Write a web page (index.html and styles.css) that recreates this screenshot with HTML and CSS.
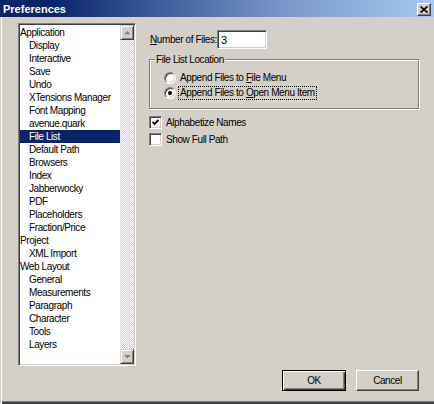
FILE: index.html
```html
<!DOCTYPE html>
<html>
<head>
<meta charset="utf-8">
<link rel="stylesheet" href="styles.css">
</head>
<body>
<div class="window">
  <div class="titlebar">
    <span class="title">Preferences</span>
    <span class="close"><svg width="8" height="7" viewBox="0 0 8 7"><path d="M0.5 0.5 L7.5 6.5 M7.5 0.5 L0.5 6.5" stroke="#000" stroke-width="1.8" fill="none"/></svg></span>
  </div>
  <div class="content">
    <div class="listbox">
      <ul class="items">
        <li class="top">Application</li>
        <li>Display</li>
        <li>Interactive</li>
        <li>Save</li>
        <li>Undo</li>
        <li>XTensions Manager</li>
        <li>Font Mapping</li>
        <li>avenue.quark</li>
        <li class="sel">File List</li>
        <li>Default Path</li>
        <li>Browsers</li>
        <li>Index</li>
        <li>Jabberwocky</li>
        <li>PDF</li>
        <li>Placeholders</li>
        <li>Fraction/Price</li>
        <li class="top">Project</li>
        <li>XML Import</li>
        <li class="top">Web Layout</li>
        <li>General</li>
        <li>Measurements</li>
        <li>Paragraph</li>
        <li>Character</li>
        <li>Tools</li>
        <li>Layers</li>
      </ul>
      <div class="scrollbar">
        <span class="sbtn"><svg width="7" height="4" viewBox="0 0 7 4"><path d="M1 4 L4.5 0.5 L8 4Z" fill="#fff"/><path d="M0 3.5 L3.5 0 L7 3.5Z" fill="#808080"/></svg></span>
        <span class="track"></span>
        <span class="sbtn"><svg width="7" height="4" viewBox="0 0 7 4"><path d="M0 0 L7 0 L3.5 3.5Z" fill="#808080"/></svg></span>
      </div>
    </div>
    <div class="right">
      <div class="num-row">
        <span class="num-label"><u>N</u>umber of Files:</span>
        <input class="field" type="text" value="3">
      </div>
      <fieldset class="group">
        <legend class="legend">File List Location</legend>
        <div class="group-body">
          <div class="radio-row">
            <span class="radio"></span>
            <span class="rlabel">Append Files to <u>F</u>ile Menu</span>
          </div>
          <div class="radio-row">
            <span class="radio on"><span class="dot"></span></span>
            <span class="rlabel focus">Append Files to <u>O</u>pen Menu Item</span>
          </div>
        </div>
      </fieldset>
      <div class="checks">
        <div class="check-row">
          <span class="cbox"><svg width="7" height="7" viewBox="0 0 7 7"><path d="M0.5 3 L2.5 5 L6.5 1" stroke="#000" stroke-width="1.8" fill="none"/></svg></span>
          <span class="clabel">Alphabetize Names</span>
        </div>
        <div class="check-row">
          <span class="cbox"></span>
          <span class="clabel">Show Full Path</span>
        </div>
      </div>
      <div class="footer">
        <button class="btn default">OK</button>
        <button class="btn">Cancel</button>
      </div>
    </div>
  </div>
</div>
</body>
</html>
```
FILE: styles.css
```css
html, body {
  margin: 0;
  padding: 0;
}
body {
  width: 434px;
  height: 404px;
  background: #d4d0c8;
  font-family: "Liberation Sans", Arial, sans-serif;
  font-size: 10px;
  letter-spacing: -0.4px;
  color: #000;
  overflow: hidden;
}
.window {
  width: 434px;
  height: 404px;
  box-sizing: border-box;
  display: flex;
  flex-direction: column;
  background: #d4d0c8;
  box-shadow: inset 1px 0 0 #d4d0c8, inset 2px 0 0 #fff, inset 0 -2px 0 #404040, inset 0 -3px 0 #808080;
}
.titlebar {
  height: 17px;
  flex: none;
  display: flex;
  align-items: center;
  justify-content: space-between;
  padding: 0 3px 0 3px;
  background: linear-gradient(to right, #0a246a 0%, #0a246a 12%, #3a5a98 35%, #7896c8 65%, #a6caf0 100%);
}
.title {
  font-family: "Liberation Sans", Arial, sans-serif;
  font-weight: bold;
  font-size: 11px;
  letter-spacing: 0;
  color: #fff;
  line-height: 13px;
  padding-top: 1px;
}
.close {
  width: 14px;
  height: 13px;
  box-sizing: border-box;
  display: flex;
  align-items: center;
  justify-content: center;
  background: #d4d0c8;
  border: 1px solid;
  border-color: #fff #404040 #404040 #fff;
  box-shadow: inset -1px -1px 0 #808080;
  margin-top: 1px;
}
.content {
  flex: 1;
  display: flex;
  padding: 6px 15px 13px 18px;
  min-height: 0;
}
.listbox {
  width: 118px;
  height: 343px;
  flex: none;
  box-sizing: border-box;
  border: 1px solid;
  border-color: #808080 #fff #fff #808080;
  box-shadow: inset 1px 1px 0 #404040, inset -1px -1px 0 #d4d0c8;
  background: #fff;
  padding: 1px;
  display: flex;
}
.items {
  list-style: none;
  margin: 0;
  padding: 1px 0 0 0;
  flex: 1;
  min-width: 0;
}
.items li {
  height: 13px;
  line-height: 13px;
  padding-left: 9px;
  white-space: nowrap;
}
.items li.top {
  padding-left: 0;
}
.items li.sel {
  background: #0a246a;
  color: #fff;
}
.scrollbar {
  width: 14px;
  flex: none;
  display: flex;
  flex-direction: column;
}
.sbtn {
  height: 15px;
  flex: none;
  box-sizing: border-box;
  border: 1px solid;
  border-color: #d4d0c8 #404040 #404040 #d4d0c8;
  box-shadow: inset 1px 1px 0 #fff, inset -1px -1px 0 #808080;
  background: #d4d0c8;
  display: flex;
  align-items: center;
  justify-content: center;
}
.track {
  flex: 1;
  background-color: #fff;
  background-image: conic-gradient(#d4d0c8 25%, #fff 0 50%, #d4d0c8 0 75%, #fff 0);
  background-size: 2px 2px;
}
.right {
  flex: 1;
  margin-left: 13px;
  display: flex;
  flex-direction: column;
  min-width: 0;
}
.num-row {
  display: flex;
  align-items: center;
  margin-top: 7px;
  padding-left: 1px;
}
.num-label {
  width: 67px;
  flex: none;
  white-space: nowrap;
}
.field {
  width: 50px;
  height: 19px;
  box-sizing: border-box;
  margin: 0;
  padding: 0 0 0 3px;
  border: 1px solid;
  border-color: #808080 #fff #fff #808080;
  box-shadow: inset 1px 1px 0 #404040, inset -1px -1px 0 #d4d0c8;
  background: #fff;
  font-family: inherit;
  font-size: 11px;
  color: #000;
  outline: none;
}
.group {
  margin: 4px 0 0 0;
  padding: 0;
  min-width: 0;
  border: 1px solid #808080;
  box-shadow: inset 1px 1px 0 #fff, 1px 1px 0 #fff;
}
.legend {
  margin-left: 5px;
  padding: 0 1px;
  line-height: 13px;
  background: #d4d0c8;
}
.group-body {
  padding: 4px 0 8px 14px;
}
.radio-row {
  height: 15px;
  display: flex;
  align-items: center;
}
.radio {
  width: 12px;
  height: 12px;
  box-sizing: border-box;
  border-radius: 50%;
  border: 1px solid;
  border-color: #808080 #fff #fff #808080;
  box-shadow: inset 1px 1px 0 #404040, inset -1px -1px 0 #d4d0c8;
  background: #fff;
  display: flex;
  align-items: center;
  justify-content: center;
  flex: none;
}
.dot {
  width: 4px;
  height: 4px;
  border-radius: 50%;
  background: #000;
}
.rlabel {
  margin-left: 2px;
  padding: 0 1px;
  line-height: 12px;
  border: 1px dotted transparent;
  white-space: nowrap;
}
.rlabel.focus {
  border-color: #000;
}
.checks {
  margin-top: 7px;
  display: flex;
  flex-direction: column;
  gap: 4px;
}
.check-row {
  height: 13px;
  display: flex;
  align-items: center;
}
.cbox {
  width: 13px;
  height: 13px;
  box-sizing: border-box;
  flex: none;
  border: 1px solid;
  border-color: #808080 #fff #fff #808080;
  box-shadow: inset 1px 1px 0 #404040, inset -1px -1px 0 #d4d0c8;
  background: #fff;
  display: flex;
  align-items: center;
  justify-content: center;
}
.clabel {
  margin-left: 4px;
  white-space: nowrap;
}
.footer {
  margin-top: auto;
  display: flex;
  justify-content: flex-end;
  gap: 10px;
}
.btn {
  height: 21px;
  width: 63px;
  box-sizing: border-box;
  margin: 0;
  padding: 0;
  font-family: inherit;
  font-size: 10px;
  letter-spacing: -0.4px;
  color: #000;
  background: #d4d0c8;
  border: 1px solid;
  border-color: #fff #404040 #404040 #fff;
  box-shadow: inset -1px -1px 0 #808080;
}
.btn.default {
  width: 64px;
  border-color: #000;
  box-shadow: inset 1px 1px 0 #fff, inset -1px -1px 0 #404040, inset -2px -2px 0 #808080;
}
```
